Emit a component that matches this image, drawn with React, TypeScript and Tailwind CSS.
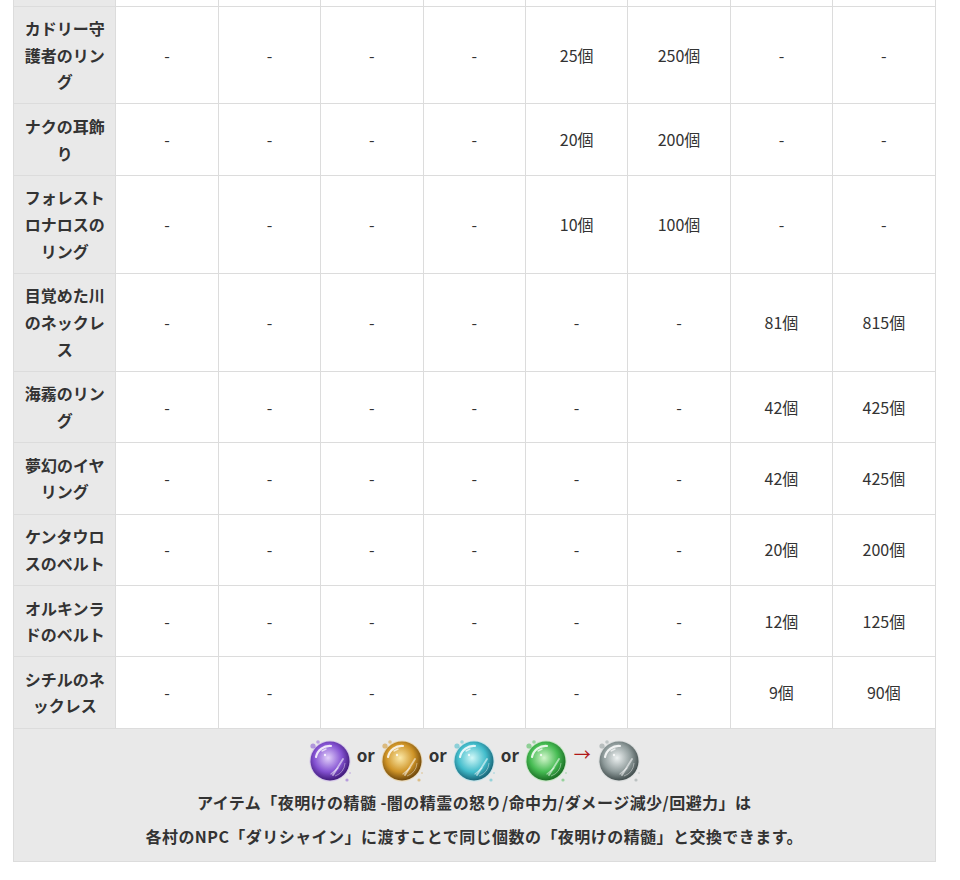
import React from 'react';

type Row = { name: string; values: string[] };

const rows: Row[] = [
  { name: 'カドリー守護者のリング', values: ['-', '-', '-', '-', '25個', '250個', '-', '-'] },
  { name: 'ナクの耳飾り', values: ['-', '-', '-', '-', '20個', '200個', '-', '-'] },
  { name: 'フォレストロナロスのリング', values: ['-', '-', '-', '-', '10個', '100個', '-', '-'] },
  { name: '目覚めた川のネックレス', values: ['-', '-', '-', '-', '-', '-', '81個', '815個'] },
  { name: '海霧のリング', values: ['-', '-', '-', '-', '-', '-', '42個', '425個'] },
  { name: '夢幻のイヤリング', values: ['-', '-', '-', '-', '-', '-', '42個', '425個'] },
  { name: 'ケンタウロスのベルト', values: ['-', '-', '-', '-', '-', '-', '20個', '200個'] },
  { name: 'オルキンラドのベルト', values: ['-', '-', '-', '-', '-', '-', '12個', '125個'] },
  { name: 'シチルのネックレス', values: ['-', '-', '-', '-', '-', '-', '9個', '90個'] },
];

type OrbColors = { id: string; light: string; mid: string; dark: string; glow: string };

const orbs: Record<string, OrbColors> = {
  purple: { id: 'purple', light: '#e2d0fa', mid: '#8452d2', dark: '#34106a', glow: '#b28be8' },
  gold: { id: 'gold', light: '#fbe9a8', mid: '#cf9427', dark: '#5e3a06', glow: '#e8b85a' },
  teal: { id: 'teal', light: '#d2f8f8', mid: '#42bccb', dark: '#11566a', glow: '#7fd9ea' },
  green: { id: 'green', light: '#d2f6cb', mid: '#45bb52', dark: '#135f1c', glow: '#7fe07a' },
  gray: { id: 'gray', light: '#eef2f2', mid: '#8f9b9b', dark: '#354040', glow: '#b9c4c4' },
};

function Orb({ c }: { c: OrbColors }) {
  return (
    <svg width="46" height="48" viewBox="0 0 46 48">
      <defs>
        <radialGradient id={`body-${c.id}`} cx="45%" cy="42%" r="62%">
          <stop offset="0%" stopColor={c.light} />
          <stop offset="58%" stopColor={c.mid} />
          <stop offset="100%" stopColor={c.dark} />
        </radialGradient>
      </defs>
      <circle cx="23" cy="24" r="20.5" fill={c.glow} opacity="0.35" />
      <circle cx="23" cy="24" r="19.5" fill={`url(#body-${c.id})`} />
      <path d="M9 20 A14 14 0 0 1 24 9" stroke="white" strokeWidth="2.2" fill="none" strokeLinecap="round" opacity="0.85" />
      <path d="M15 14 L19 12" stroke="white" strokeWidth="1.4" strokeLinecap="round" opacity="0.7" />
      <path d="M36 22 L26 38" stroke="white" strokeWidth="1.8" strokeLinecap="round" opacity="0.55" />
      <path d="M31 31 L24 37" stroke="white" strokeWidth="1.2" strokeLinecap="round" opacity="0.5" />
      <path d="M38 26 A15 15 0 0 1 28 39" stroke="white" strokeWidth="1" fill="none" opacity="0.4" />
      <circle cx="18" cy="18" r="1.2" fill="white" opacity="0.8" />
      <circle cx="6" cy="9" r="2.6" fill={c.mid} opacity="0.55" />
      <circle cx="11" cy="5" r="1.8" fill={c.mid} opacity="0.45" />
      <circle cx="40" cy="43" r="1.6" fill={c.mid} opacity="0.5" />
      <circle cx="43" cy="36" r="0.8" fill={c.mid} opacity="0.5" />
    </svg>
  );
}

function Or() {
  return <span className="font-bold text-[17px] leading-none text-[#333] mb-[12px]">or</span>;
}

export default function App() {
  const cell = 'border border-[#dcdcdc] text-center align-middle';
  return (
    <div className="min-h-[880px] bg-white font-['Noto_Sans_CJK_JP',sans-serif] text-[#333] text-[16px] leading-[26.6px]">
      <table className="ml-[13px] w-[922px] table-fixed border-collapse">
        <colgroup>
          {Array.from({ length: 9 }).map((_, i) => (
            <col key={i} className="w-[102.4px]" />
          ))}
        </colgroup>
        <tbody>
          <tr>
            <td className={`${cell} border-t-0 h-[6px] p-0 bg-[#e9e9e9]`} />
            {Array.from({ length: 8 }).map((_, i) => (
              <td key={i} className={`${cell} border-t-0 h-[6px] p-0`} />
            ))}
          </tr>
          {rows.map((row) => (
            <tr key={row.name}>
              <th className={`${cell} bg-[#e9e9e9] font-bold px-[10px] py-[8.6px]`}>{row.name}</th>
              {row.values.map((v, i) => (
                <td key={i} className={`${cell} px-2 py-[8.6px]`}>
                  {v}
                </td>
              ))}
            </tr>
          ))}
          <tr>
            <td colSpan={9} className={`${cell} bg-[#e9e9e9] pt-2 pb-2`}>
              <div className="flex items-center justify-center gap-[4px] h-12">
                <Orb c={orbs.purple} />
                <Or />
                <Orb c={orbs.gold} />
                <Or />
                <Orb c={orbs.teal} />
                <Or />
                <Orb c={orbs.green} />
                <span className="text-[#b01818] text-[17px] leading-none mb-[14px] mx-[1px]">→</span>
                <Orb c={orbs.gray} />
              </div>
              <p className="font-bold leading-[34px] tracking-[0.45px]">
                アイテム「夜明けの精髄 -闇の精霊の怒り/命中力/ダメージ減少/回避力」は
              </p>
              <p className="font-bold leading-[34px] tracking-[0.45px]">
                各村のNPC「ダリシャイン」に渡すことで同じ個数の「夜明けの精髄」と交換できます。
              </p>
            </td>
          </tr>
        </tbody>
      </table>
    </div>
  );
}
